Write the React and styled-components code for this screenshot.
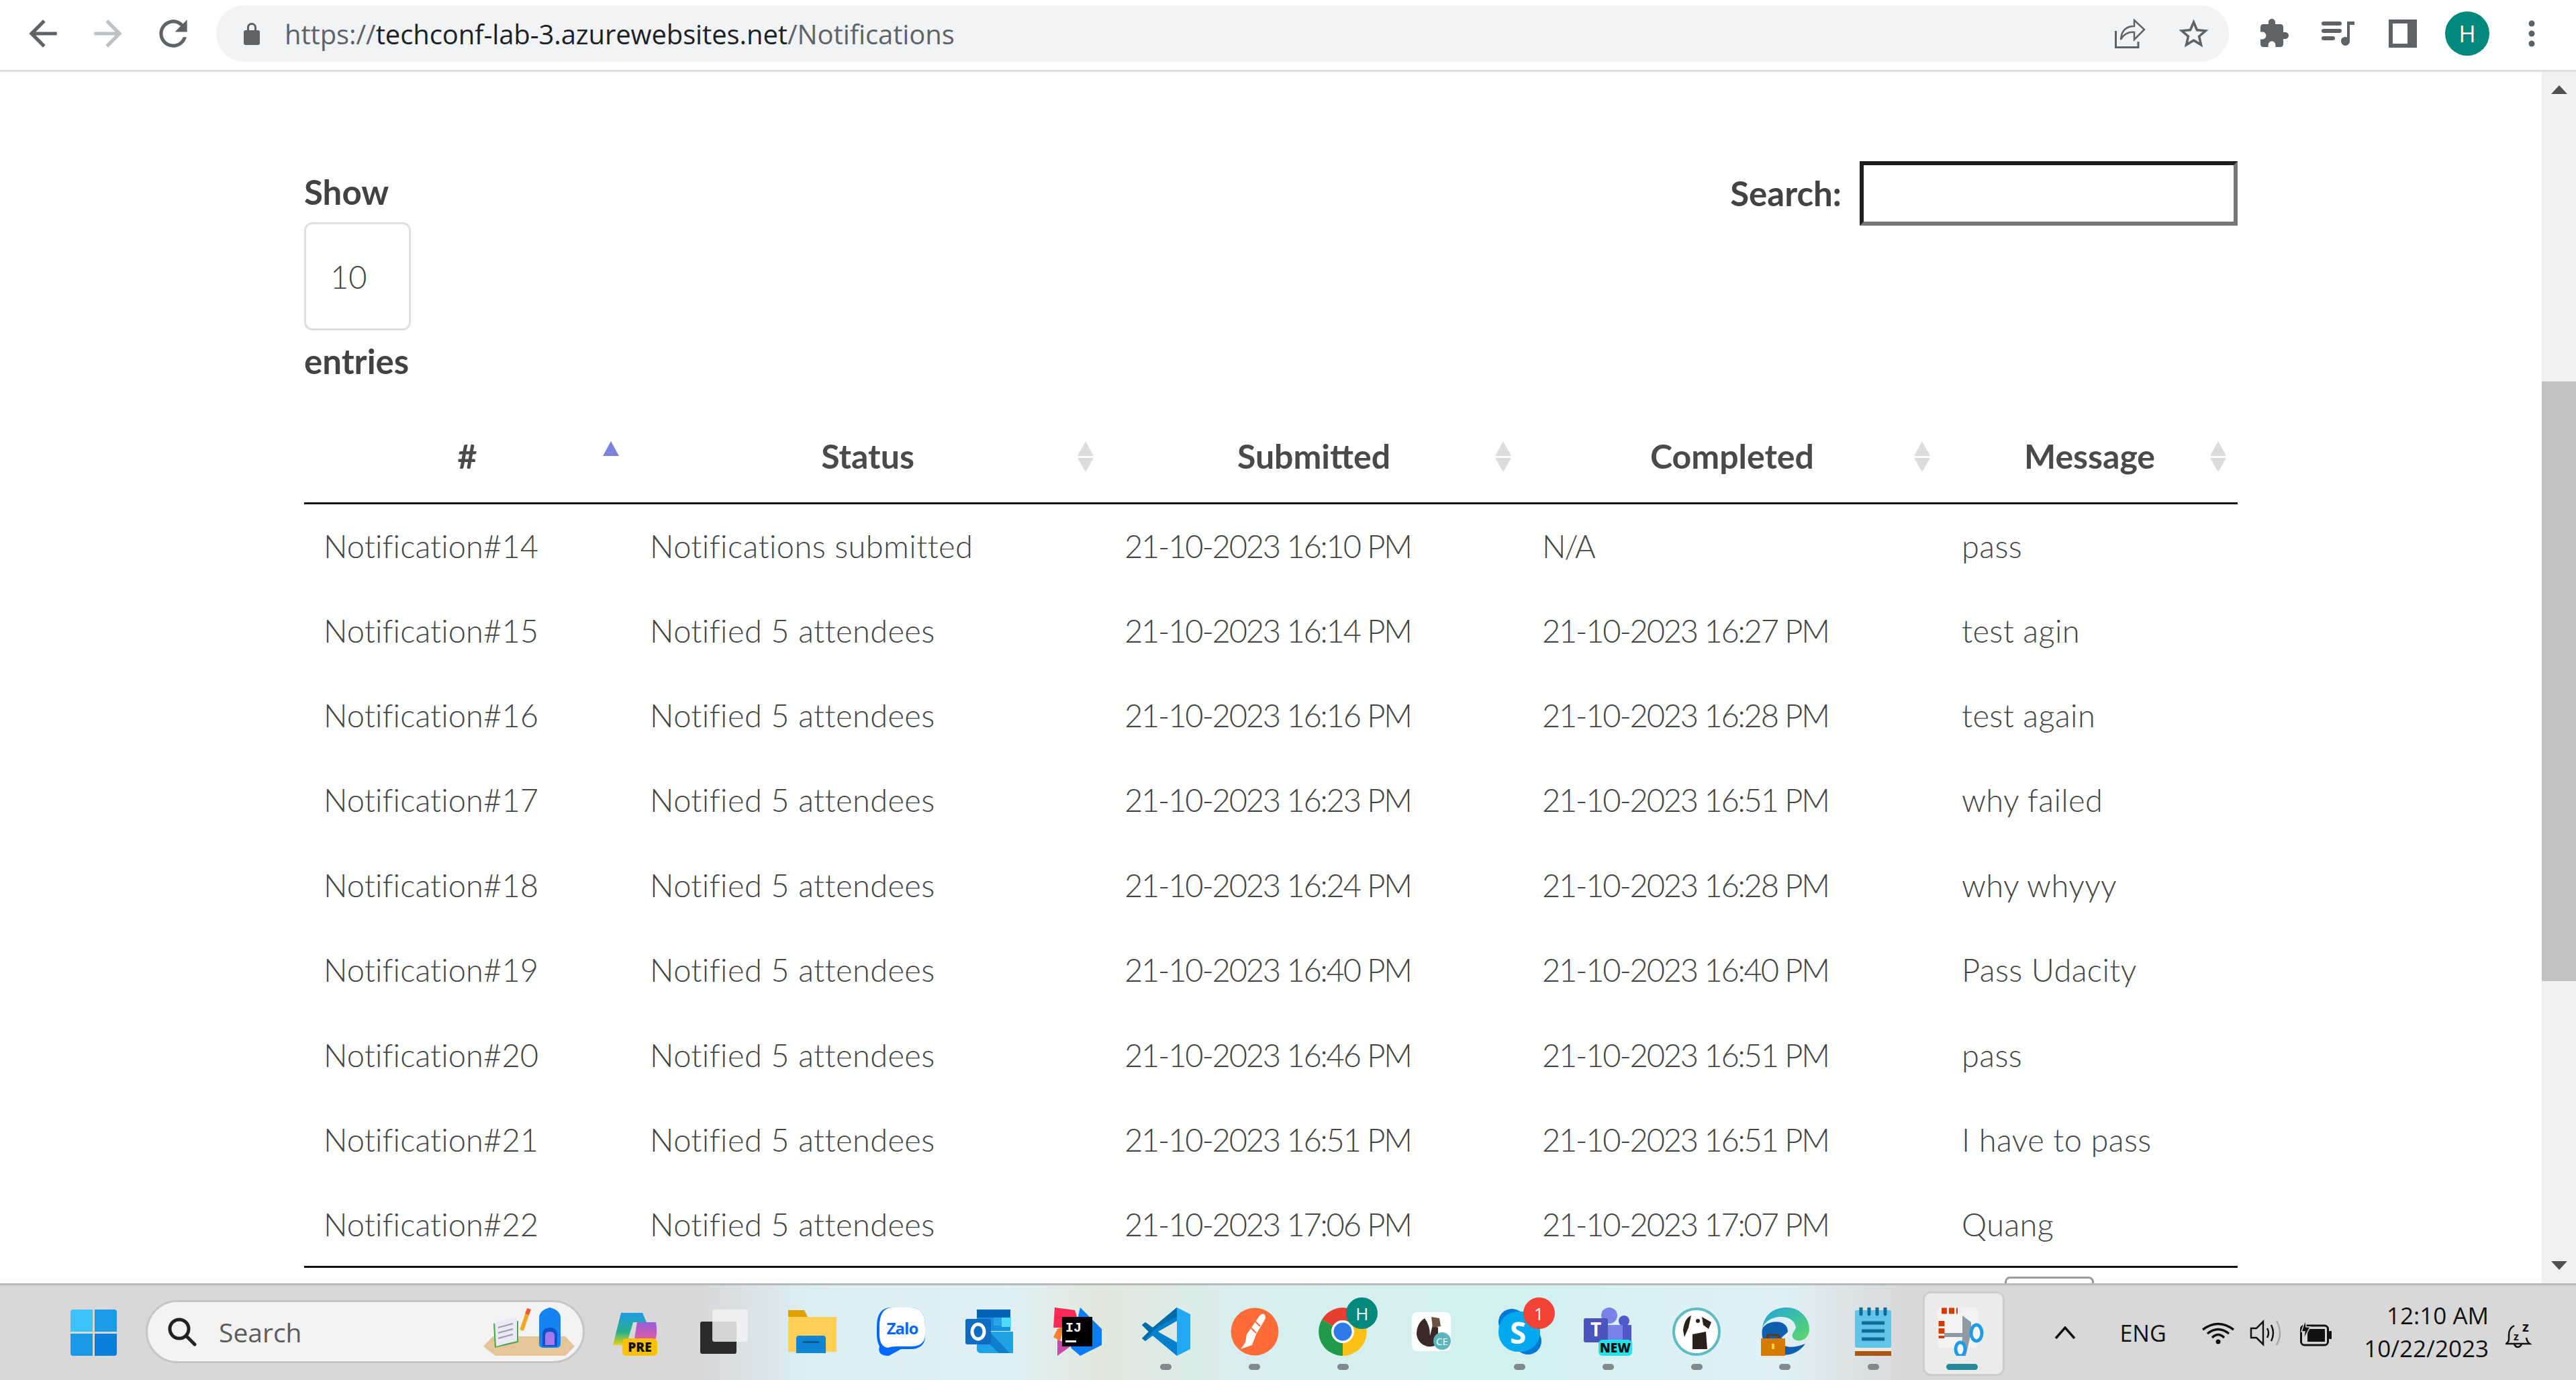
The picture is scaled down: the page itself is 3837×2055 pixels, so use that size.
import React from "react";
import styled, { createGlobalStyle } from "styled-components";

const rows = [
  ["Notification#14", "Notifications submitted", "21-10-2023 16:10 PM", "N/A", "pass"],
  ["Notification#15", "Notified 5 attendees", "21-10-2023 16:14 PM", "21-10-2023 16:27 PM", "test agin"],
  ["Notification#16", "Notified 5 attendees", "21-10-2023 16:16 PM", "21-10-2023 16:28 PM", "test again"],
  ["Notification#17", "Notified 5 attendees", "21-10-2023 16:23 PM", "21-10-2023 16:51 PM", "why failed"],
  ["Notification#18", "Notified 5 attendees", "21-10-2023 16:24 PM", "21-10-2023 16:28 PM", "why whyyy"],
  ["Notification#19", "Notified 5 attendees", "21-10-2023 16:40 PM", "21-10-2023 16:40 PM", "Pass Udacity"],
  ["Notification#20", "Notified 5 attendees", "21-10-2023 16:46 PM", "21-10-2023 16:51 PM", "pass"],
  ["Notification#21", "Notified 5 attendees", "21-10-2023 16:51 PM", "21-10-2023 16:51 PM", "I have to pass"],
  ["Notification#22", "Notified 5 attendees", "21-10-2023 17:06 PM", "21-10-2023 17:07 PM", "Quang"],
];
const columns = [
  { title: "#", width: 486, sort: "asc" },
  { title: "Status", width: 707, sort: "none" },
  { title: "Submitted", width: 622, sort: "none" },
  { title: "Completed", width: 624, sort: "none" },
  { title: "Message", width: 441, sort: "none" },
];

const GlobalStyle = createGlobalStyle`
  html, body { margin: 0; padding: 0; background: #fff; overflow: hidden; }
  * { box-sizing: border-box; }
`;
const Screen = styled.div`
  width: 3837px;
  height: 2055px;
  display: flex;
  flex-direction: column;
  overflow: hidden;
  font-family: "Open Sans", "Liberation Sans", sans-serif;
`;

/* browser toolbar */
const Toolbar = styled.div`
  height: 107px;
  flex: none;
  display: flex;
  align-items: flex-start;
  padding: 8px 18px 0 15px;
  background: #fff;
  border-bottom: 3px solid #dedede;
`;
const ToolSlot = styled.div`
  width: ${(p) => p.$w || 96}px;
  height: 84px;
  flex: none;
  display: flex;
  align-items: center;
  justify-content: center;
`;
const UrlBar = styled.div`
  flex: 1;
  height: 84px;
  margin: 0 19px 0 16px;
  padding: 0 5px 0 40px;
  border-radius: 42px;
  background: #f1f3f4;
  display: flex;
  align-items: center;
`;
const Url = styled.div`
  margin-left: 36px;
  font-size: 40px;
  letter-spacing: -0.1px;
  color: #5f6368;
  white-space: nowrap;
  span { color: #202124; }
`;
const UrlActions = styled.div`
  margin-left: auto;
  display: flex;
`;
const Avatar = styled.div`
  width: 66px;
  height: 66px;
  border-radius: 50%;
  background: #00897b;
  color: #fff;
  font-size: 34px;
  display: flex;
  align-items: center;
  justify-content: center;
`;

/* page */
const Viewport = styled.div`
  flex: 1;
  min-height: 0;
  display: flex;
`;
const Page = styled.div`
  flex: 1;
  min-width: 0;
  overflow: hidden;
  padding: 133px 453px 0;
  background: #fff;
  font-family: "Lato", "Open Sans", sans-serif;
  color: #444;
`;
const Controls = styled.div`
  display: flex;
  justify-content: space-between;
  align-items: flex-start;
`;
const Length = styled.div`
  display: flex;
  flex-direction: column;
  align-items: flex-start;
`;
const ControlLabel = styled.div`
  font-size: 51px;
  font-weight: 700;
  line-height: ${(p) => p.$lh}px;
  margin-top: ${(p) => p.$mt || 0}px;
  color: #424242;
`;
const SelectBox = styled.div`
  width: 159px;
  height: 161px;
  border: 3px solid #dfdfdf;
  border-radius: 12px;
  padding-left: 36px;
  display: flex;
  align-items: center;
  font-size: 47px;
  font-weight: 300;
  color: #444;
`;
const SearchWrap = styled.div`
  display: flex;
  align-items: center;
  gap: 27px;
`;
const SearchInput = styled.div`
  width: 563px;
  height: 96px;
  border-style: solid;
  border-width: 6px;
  border-color: #1f1f1f #767676 #767676 #1f1f1f;
`;
const Table = styled.table`
  width: 2880px;
  margin-top: 31px;
  border-collapse: collapse;
  table-layout: fixed;
`;
const HeadCell = styled.th`
  position: relative;
  width: ${(p) => p.$w}px;
  height: 138px;
  padding: 0;
  font-size: 50px;
  font-weight: 700;
  text-align: center;
  color: #4a4a4a;
  border-bottom: 3px solid #111;
  &::before, &::after {
    content: "";
    position: absolute;
    right: 17px;
    border-left: 12.5px solid transparent;
    border-right: 12.5px solid transparent;
  }
  &::before {
    top: 46px;
    border-bottom: 22px solid ${(p) => (p.$sort === "asc" ? "#7b83dc" : "#dcdcdc")};
  }
  &::after {
    top: 71px;
    border-top: 21px solid ${(p) => (p.$sort === "asc" ? "transparent" : "#dcdcdc")};
  }
`;
const BodyRow = styled.tr`
  height: 126.4px;
  &:last-child td { border-bottom: 3px solid #111; }
`;
const Cell = styled.td`
  padding: 0 0 0 ${(p) => (p.$last ? 30 : 29)}px;
  font-size: 47px;
  font-weight: 300;
  letter-spacing: ${(p) => p.$spacing}px;
  color: #444;
  white-space: nowrap;
`;
const Pager = styled.div`
  display: flex;
  justify-content: flex-end;
  padding: 13px 214px 0 0;
`;
const PageButton = styled.div`
  width: 133px;
  height: 60px;
  border: 3px solid #9a9a9a;
  border-radius: 8px;
`;

/* scrollbar */
const Scrollbar = styled.div`
  width: 51px;
  flex: none;
  background: #f1f1f1;
  display: flex;
  flex-direction: column;
  align-items: center;
`;
const ScrollArrow = styled.div`
  margin-top: ${(p) => (p.$down ? "auto" : "20px")};
  margin-bottom: ${(p) => (p.$down ? "20px" : "0")};
  border-left: 12.5px solid transparent;
  border-right: 12.5px solid transparent;
  ${(p) => (p.$down ? "border-top" : "border-bottom")}: 13px solid #505050;
`;
const ScrollThumb = styled.div`
  width: 100%;
  height: 893px;
  margin-top: 428px;
  background: #c1c1c1;
`;

/* taskbar */
const Taskbar = styled.div`
  height: 144px;
  flex: none;
  display: flex;
  align-items: flex-start;
  padding-left: 105px;
  border-top: 3px solid #b8b8b8;
  background: linear-gradient(90deg, #d8d8d8 0, #d8d8d8 1040px, #dceef5 1200px, #dff1f7 1500px,
    #e1e8dc 1640px, #d8eeee 1850px, #d3f0f1 2250px, #dff1f7 2650px, #d8d8d8 2840px, #d8d8d8 100%);
`;
const StartIcon = styled.div`
  width: 69px;
  height: 69px;
  margin-top: 36px;
  flex: none;
`;
const SearchPill = styled.div`
  width: 654px;
  height: 94px;
  margin: 22px 10px 0 43px;
  padding: 0 12px 0 29px;
  flex: none;
  border: 3px solid #c6c6c6;
  border-radius: 47px;
  background: #f3f3f3;
  display: flex;
  align-items: center;
  font-size: 39px;
  color: #5c5c5c;
  gap: 33px;
  svg:last-child { margin-left: auto; }
`;
const TaskSlot = styled.div`
  position: relative;
  width: 131.7px;
  flex: none;
  padding-top: 33px;
  display: flex;
  flex-direction: column;
  align-items: center;
  ${(p) => p.$active && `
    &::before {
      content: "";
      position: absolute;
      left: 8px;
      top: 9px;
      width: 116px;
      height: 120px;
      background: #ebebeb;
      border: 3px solid #cdcdcd;
      border-radius: 12px;
    }
  `}
`;
const TaskIcon = styled.div`
  position: relative;
  width: 72px;
  height: 72px;
`;
const Running = styled.div`
  position: relative;
  width: ${(p) => (p.$active ? 47 : 17)}px;
  height: 9px;
  margin-top: 12px;
  border-radius: 5px;
  background: ${(p) => (p.$active ? "#248a9a" : "#808a8c")};
`;
const Badge = styled.div`
  position: absolute;
  top: -15px;
  right: -16px;
  width: 47px;
  height: 47px;
  border-radius: 50%;
  background: ${(p) => p.$bg};
  color: #fff;
  font-size: 26px;
  display: flex;
  align-items: center;
  justify-content: center;
`;
const Tray = styled.div`
  flex: 1;
  display: flex;
  align-items: center;
  height: 141px;
  padding-left: 52px;
  color: #111;
`;
const TraySlot = styled.div`
  width: ${(p) => p.$w}px;
  margin-left: ${(p) => p.$ml || 0}px;
  flex: none;
  display: flex;
  align-items: center;
  justify-content: center;
  font-size: 34px;
`;
const Clock = styled.div`
  width: 217px;
  margin: -4px 0 0 5px;
  flex: none;
  text-align: right;
  font-size: 35px;
  line-height: 49px;
`;

/* chrome icons */
const Icon = ({ size, color = "#5f6368", d }) => (
  <svg width={size} height={size} viewBox="0 0 24 24" fill={color}><path d={d} /></svg>
);
const ShareIcon = () => (
  <svg width="46" height="44" viewBox="0 0 46 44" fill="none" stroke="#5f6368" strokeWidth="2.5">
    <path d="M1.5 18V42.5H35V34" strokeWidth="3" />
    <path d="M9 31C10 17 17 11 29 11V2L44 16 29 31V20C21 19 13 23 9 31Z" />
  </svg>
);
const QueueIcon = () => (
  <svg width="50" height="38" viewBox="0 0 50 38" fill="#5f6368">
    <rect x="0" y="1" width="30" height="6" rx="3" />
    <rect x="0" y="12" width="30" height="6" rx="3" />
    <rect x="0" y="23" width="20" height="6" rx="3" />
    <path d="M38 1H49V6H42V30C42 34 39 37 35.5 37S29 34 29 30 32 24 35.500 24C36.500 24 37.300 24.200 38 24.500Z" />
  </svg>
);
const PanelIcon = () => (
  <svg width="42" height="42" viewBox="0 0 42 42" fill="#5f6368" fillRule="evenodd">
    <path d="M0 0H42V42H0ZM6 6V36H28V6Z" />
  </svg>
);
const DotsIcon = () => (
  <svg width="10" height="40" viewBox="0 0 10 40" fill="#5f6368">
    <circle cx="5" cy="5" r="4.500" />
    <circle cx="5" cy="20" r="4.500" />
    <circle cx="5" cy="35" r="4.500" />
  </svg>
);
const LockIcon = () => (
  <svg width="26" height="34" viewBox="0 0 26 34" fill="#5f6368">
    <path d="M6 13V8C6 4 9 1 13 1S20 4 20 8V13H17V8C17 5.500 15.500 4 13 4S9 5.500 9 8V13Z" />
    <rect x="1" y="12" width="24" height="22" rx="3" />
  </svg>
);

/* taskbar icons, all in a 72 box */
const Svg = ({ children }) => (
  <svg width="72" height="72" viewBox="0 0 72 72" style={{ display: "block" }}>{children}</svg>
);
const StartLogo = () => (
  <svg width="69" height="69" viewBox="0 0 69 69" style={{ display: "block" }}>
    <path d="M0 4Q0 0 4 0H33V33H0Z" fill="#3cc3fb" />
    <path d="M36 0H65Q69 0 69 4V33H36Z" fill="#1c9be6" />
    <path d="M0 36H33V69H4Q0 69 0 65Z" fill="#1a9ae5" />
    <path d="M36 36H69V65Q69 69 65 69H36Z" fill="#0a7fda" />
  </svg>
);
const Magnifier = () => (
  <svg width="44" height="44" viewBox="0 0 44 44" fill="none" stroke="#222" strokeWidth="5">
    <circle cx="18" cy="18" r="14" />
    <path d="M28 28L41 41" strokeLinecap="round" />
  </svg>
);
const SchoolArt = () => (
  <svg width="136" height="72" viewBox="0 0 136 72">
    <path d="M14 43H122L136 58 122 72H18L0 58Z" fill="#e6c49a" />
    <path d="M15 24L52 20V52L17 60Z" fill="#4aa84f" />
    <path d="M17 22L33 18 50 14V50L33 54 19 58Z" fill="#ece8f4" />
    <path d="M22 30L44 24M22 38L44 32M22 46L44 40" stroke="#9d98ad" strokeWidth="2" />
    <path d="M68 2L57 34" stroke="#f6a623" strokeWidth="6" />
    <path d="M68 2L65 10" stroke="#f0573a" strokeWidth="6" />
    <path d="M83 16Q83 4 99 0Q115 4 115 16V54Q115 60 108 60H90Q83 60 83 54Z" fill="#1683f5" />
    <path d="M88 58V40Q88 30 99 30T110 40V58Z" fill="#0a54c9" />
    <path d="M92 56V42Q92 36 99 36T106 42V56Z" fill="#a678ee" />
  </svg>
);
const CopilotIcon = () => (
  <Svg>
    <defs>
      <linearGradient id="cop" x1="0" y1="0" x2="0" y2="1">
        <stop offset="0" stopColor="#1f9be8" />
        <stop offset="0.6" stopColor="#28b08a" />
        <stop offset="1" stopColor="#e6d414" />
      </linearGradient>
      <linearGradient id="cop2" x1="0" y1="0" x2="0" y2="1">
        <stop offset="0" stopColor="#9a5ce0" />
        <stop offset="1" stopColor="#f8608a" />
      </linearGradient>
    </defs>
    <path d="M14 8H46L52 22H32L22 56H2Z" fill="url(#cop)" />
    <path d="M38 22H66Q70 40 62 58H32Z" fill="url(#cop2)" />
    <rect x="16" y="46" width="52" height="26" rx="6" fill="#ffc000" />
    <text x="42" y="66" textAnchor="middle" fontFamily="Open Sans" fontWeight="800" fontSize="19" fill="#111">PRE</text>
  </Svg>
);
const TaskViewIcon = () => (
  <Svg>
    <rect x="0" y="21" width="54" height="48" rx="3" fill="#2b2b2b" />
    <rect x="18" y="3" width="53" height="48" rx="3" fill="#f2f2f2" fillOpacity="0.85" />
  </Svg>
);
const FolderIcon = () => (
  <Svg>
    <path d="M0 4H24L30 16H0Z" fill="#dfa000" />
    <path d="M0 14H72V66H0Z" fill="#ffcf58" />
    <path d="M12 46Q12 42 16 42H52Q56 42 56 46V68H12Z" fill="#0f86d4" />
    <rect x="22" y="50" width="24" height="3" fill="#0a5a94" />
  </Svg>
);
const ZaloIcon = () => (
  <Svg>
    <path d="M22 0H50Q72 0 72 28V42Q72 62 50 62H36L18 72Q0 72 4 58Q0 50 0 40V28Q0 0 22 0Z" fill="#0068ff" />
    <path d="M24 0H50Q72 0 72 28V40Q72 58 50 58H30Q22 58 16 60Q4 58 4 40V28Q4 0 24 0Z" fill="#fff" />
    <text x="38" y="40" textAnchor="middle" fontFamily="Open Sans" fontWeight="700" fontSize="24" letterSpacing="-1" fill="#0068ff">Zalo</text>
  </Svg>
);
const OutlookIcon = () => (
  <Svg>
    <rect x="17" y="3" width="50" height="32" fill="#1490df" />
    <rect x="17" y="3" width="50" height="12" fill="#0364b8" />
    <rect x="42" y="15" width="25" height="12" fill="#28a8ea" />
    <rect x="54" y="15" width="14" height="14" fill="#50d9ff" />
    <path d="M17 36H71V68H24Q17 68 17 62Z" fill="#1fa2e6" />
    <path d="M17 36L50 68H66L36 36Z" fill="#0f7fcb" />
    <rect x="0" y="17" width="38" height="38" rx="3" fill="#0f6cc1" />
    <ellipse cx="19" cy="36" rx="9" ry="11" fill="none" stroke="#fff" strokeWidth="5" />
  </Svg>
);
const IdeaIcon = () => (
  <Svg>
    <path d="M2 0L32 4 40 30H0Z" fill="#fe2857" />
    <path d="M40 0L72 32V56L40 72 26 60Z" fill="#087cfa" />
    <path d="M6 32L16 28 10 50 0 44Z" fill="#fe7f2d" />
    <path d="M6 48L28 56 6 72Z" fill="#c74ca6" />
    <rect x="13" y="14" width="45" height="44" fill="#000" />
    <text x="18" y="36" fontFamily="Liberation Mono" fontWeight="700" fontSize="20" fill="#fff">IJ</text>
    <rect x="18" y="49" width="16" height="3" fill="#fff" />
  </Svg>
);
const VsCodeIcon = () => (
  <Svg>
    <path d="M52 0L72 10V62L52 72Z" fill="#23a9f1" />
    <path d="M52 0V20L24 36 52 52V72L16 42 5 50 0 46 10 36 0 26 5 22 16 30Z" fill="#0080cc" />
    <path d="M52 0L16 30 5 22 0 26 10 36 0 46 5 50Q14 30 52 14Z" fill="#0069a8" />
  </Svg>
);
const PostmanIcon = () => (
  <Svg>
    <circle cx="36" cy="36" r="35.500" fill="#ff6c37" />
    <path d="M50 10Q54 14 50 20L38 40 32 56 15 62 22 52 24 40 42 14Q46 8 50 10Z" fill="#fff" />
    <path d="M36 20L44 28M30 30L38 38" stroke="#ff6c37" strokeWidth="2" />
  </Svg>
);
const ChromeIcon = () => (
  <Svg>
    <path d="M36 36L5 18A36 36 0 0 1 67 18Z" fill="#e5402f" />
    <path d="M36 36L67 18A36 36 0 0 1 36 72Z" fill="#fbc116" />
    <path d="M36 36V72A36 36 0 0 1 5 18Z" fill="#1e9a48" />
    <circle cx="36" cy="36" r="17" fill="#fff" />
    <circle cx="36" cy="36" r="13.500" fill="#2f7ce8" />
  </Svg>
);
const BearIcon = () => (
  <Svg>
    <rect x="7" y="7" width="58" height="58" rx="8" fill="#fff" />
    <path d="M26 16Q14 24 14 40Q16 54 30 58Q44 60 46 50V30L38 26 34 42Q34 26 26 16Z" fill="#3a2a25" />
    <path d="M36 14L48 16 50 28 38 30Z" fill="#6e5140" />
    <circle cx="52" cy="50" r="13" fill="#5bb5bd" />
    <text x="52" y="56" textAnchor="middle" fontFamily="Open Sans" fontSize="15" fill="#fff">CE</text>
  </Svg>
);
const SkypeIcon = () => (
  <Svg>
    <circle cx="24" cy="22" r="20" fill="#0078d4" />
    <circle cx="48" cy="50" r="20" fill="#0078d4" />
    <rect x="4" y="6" width="62" height="60" rx="29" fill="#00a8ee" />
    <text x="33" y="54" textAnchor="middle" fontFamily="Open Sans" fontWeight="700" fontSize="44" fill="#fff">S</text>
  </Svg>
);
const TeamsIcon = () => (
  <Svg>
    <circle cx="38" cy="12" r="12" fill="#7b83eb" />
    <circle cx="60" cy="20" r="8" fill="#5059c9" />
    <path d="M24 26H58V60H24Z" fill="#7b83eb" />
    <path d="M58 26H71V58H58Z" fill="#5059c9" />
    <rect x="0" y="16" width="36" height="36" rx="3" fill="#4b53bc" />
    <text x="18" y="43" textAnchor="middle" fontFamily="Open Sans" fontWeight="700" fontSize="28" fill="#fff">T</text>
    <rect x="22" y="48" width="50" height="24" rx="6" fill="#22e3e8" />
    <text x="47" y="67" textAnchor="middle" fontFamily="Open Sans" fontWeight="800" fontSize="19" fill="#111">NEW</text>
  </Svg>
);
const DogIcon = () => (
  <Svg>
    <circle cx="36" cy="36" r="34" fill="#fff" stroke="#5cbcc0" strokeWidth="4" />
    <path d="M16 34Q18 16 28 12L24 30 18 44Z" fill="#2a201c" />
    <path d="M44 14L58 22 54 32 46 26Z" fill="#2a201c" />
    <path d="M30 40L50 36 52 62H30Z" fill="#2a201c" />
    <circle cx="38" cy="20" r="3" fill="#2a201c" />
  </Svg>
);
const EdgeIcon = () => (
  <Svg>
    <defs>
      <linearGradient id="edge" x1="0" y1="0" x2="1" y2="1">
        <stop offset="0" stopColor="#1ea6dc" />
        <stop offset="1" stopColor="#5fd868" />
      </linearGradient>
    </defs>
    <path d="M2 32C4 10 20 0 38 0C60 0 72 18 72 32C72 48 56 54 48 46C44 40 50 36 52 30C50 18 40 14 30 14C16 14 4 22 2 32Z" fill="url(#edge)" />
    <path d="M2 32C8 18 40 16 40 36C36 42 30 42 30 50C34 62 50 60 66 54C54 72 30 76 14 64C4 56 0 44 2 32Z" fill="#0f5fb0" />
    <path d="M0 46H36V72H0Z" fill="#d67a00" />
    <path d="M10 46V41H26V46" fill="none" stroke="#5a3a10" strokeWidth="3" />
    <rect x="16" y="54" width="4" height="8" fill="#ffd24a" />
  </Svg>
);
const NotepadIcon = () => (
  <Svg>
    <rect x="9" y="4" width="54" height="56" rx="3" fill="#62c4e8" />
    <rect x="9" y="60" width="54" height="12" fill="#a9560f" />
    <rect x="9" y="60" width="54" height="5" fill="#f0e8dc" />
    <path d="M18 1V10M30 1V10M42 1V10M54 1V10" stroke="#0d6d95" strokeWidth="5" strokeLinecap="round" />
    <path d="M19 23H53M19 35H53M19 47H53" stroke="#0d6d95" strokeWidth="5" />
  </Svg>
);
const SnipIcon = () => (
  <Svg>
    <rect x="0" y="0" width="60" height="60" rx="6" fill="#f3f3f3" />
    <path d="M6 5H30M6 20V46" stroke="#d83b01" strokeWidth="9" strokeDasharray="8 3" />
    <path d="M37 12L50 22V38L42 72H34L37 44H10V38H37Z" fill="#8f9aa5" />
    <ellipse cx="58" cy="38" rx="8" ry="12" fill="#fff" stroke="#1f9be8" strokeWidth="5" />
    <ellipse cx="34" cy="62" rx="7" ry="10" fill="#fff" stroke="#1f9be8" strokeWidth="5" />
  </Svg>
);

/* tray icons */
const ChevronIcon = () => (
  <svg width="32" height="19" viewBox="0 0 32 19" fill="none" stroke="#111" strokeWidth="3.500">
    <path d="M2 18L16 2 30 18" />
  </svg>
);
const WifiIcon = () => (
  <svg width="50" height="34" viewBox="0 0 50 34" fill="none" stroke="#111" strokeWidth="3.500">
    <path d="M2 12Q25 -5 48 12M9 18Q25 5 41 18M16 24Q25 15 34 24" />
    <circle cx="25" cy="30" r="3.500" fill="#111" stroke="none" />
  </svg>
);
const VolumeIcon = () => (
  <svg width="48" height="40" viewBox="0 0 48 40" fill="none" stroke="#111" strokeWidth="2.500">
    <path d="M2 13H10L20 3V37L10 27H2Z" />
    <path d="M26 13Q30 20 26 27M32 8Q38 20 32 32" />
    <path d="M40 2Q50 20 40 38" stroke="#a8a8a8" />
  </svg>
);
const BatteryIcon = () => (
  <svg width="48" height="40" viewBox="0 0 48 40" fill="none" stroke="#111" strokeWidth="3">
    <rect x="1.500" y="9" width="40" height="29" rx="5" />
    <rect x="11" y="14" width="26" height="19" fill="#111" stroke="none" />
    <rect x="43" y="17" width="4" height="12" rx="1" fill="#111" stroke="none" />
    <path d="M8 0L2 18H7L5 30 15 11H9Z" fill="#111" stroke="#d8d8d8" strokeWidth="1.500" />
  </svg>
);
const BellIcon = () => (
  <svg width="42" height="54" viewBox="0 -10 42 54" fill="none" stroke="#111" strokeWidth="2.500">
    <path d="M13 6Q5 10 5 20V26Q5 30 1 33H36Q32 30 31 24" />
    <path d="M13 34Q18 42 24 34" />
    <text x="12" y="28" fontFamily="Open Sans" fontWeight="700" fontSize="16" fill="#111" stroke="none">z</text>
    <text x="25" y="15" fontFamily="Open Sans" fontWeight="700" fontSize="20" fill="#111" stroke="none">z</text>
  </svg>
);

const taskItems = [
  { icon: <CopilotIcon /> },
  { icon: <TaskViewIcon /> },
  { icon: <FolderIcon /> },
  { icon: <ZaloIcon /> },
  { icon: <OutlookIcon /> },
  { icon: <IdeaIcon /> },
  { icon: <VsCodeIcon />, running: true },
  { icon: <PostmanIcon />, running: true },
  { icon: <ChromeIcon />, running: true, badge: { text: "H", bg: "#00897b" } },
  { icon: <BearIcon /> },
  { icon: <SkypeIcon />, running: true, badge: { text: "1", bg: "#f44336" } },
  { icon: <TeamsIcon />, running: true },
  { icon: <DogIcon />, running: true },
  { icon: <EdgeIcon />, running: true },
  { icon: <NotepadIcon />, running: true },
  { icon: <SnipIcon />, running: true, active: true },
];

const cellSpacing = [0.1, 0.4, -2.2, -2.2, 0.4];

function App() {
  return (
    <Screen>
      <GlobalStyle />
      <Toolbar>
        <ToolSlot $w={97}>
          <Icon size={62} d="M20 11H7.830l5.590-5.590L12 4l-8 8 8 8 1.410-1.410L7.830 13H20v-2z" />
        </ToolSlot>
        <ToolSlot $w={97}>
          <Icon size={62} color="#bdc1c6" d="M12 4l-1.410 1.410L16.170 11H4v2h12.170l-5.580 5.590L12 20l8-8z" />
        </ToolSlot>
        <ToolSlot $w={97}>
          <Icon size={62} d="M17.650 6.350C16.200 4.900 14.210 4 12 4c-4.420 0-7.990 3.580-7.990 8s3.570 8 7.990 8c3.730 0 6.840-2.550 7.730-6h-2.080c-.820 2.330-3.040 4-5.650 4-3.310 0-6-2.690-6-6s2.690-6 6-6c1.660 0 3.140.690 4.220 1.780L13 11h7V4l-2.350 2.350z" />
        </ToolSlot>
        <UrlBar>
          <LockIcon />
          <Url>https://<span>techconf-lab-3.azurewebsites.net</span>/Notifications</Url>
          <UrlActions>
            <ToolSlot $w={95}><ShareIcon /></ToolSlot>
            <ToolSlot $w={95}>
              <Icon size={53} d="M22 9.240l-7.190-.620L12 2 9.190 8.630 2 9.240l5.460 4.730L5.820 21 12 17.270 18.180 21l-1.630-7.030L22 9.240zM12 15.400l-3.760 2.270 1-4.280-3.320-2.880 4.380-.380L12 6.100l1.710 4.040 4.380.380-3.320 2.880 1 4.280L12 15.400z" />
            </ToolSlot>
          </UrlActions>
        </UrlBar>
        <ToolSlot>
          <Icon size={48} d="M20.500 11H19V7c0-1.100-.900-2-2-2h-4V3.500C13 2.120 11.880 1 10.500 1S8 2.120 8 3.500V5H4c-1.100 0-1.990.900-1.990 2v3.800H3.500c1.490 0 2.700 1.210 2.700 2.700s-1.210 2.700-2.700 2.700H2V20c0 1.100.900 2 2 2h3.800v-1.500c0-1.490 1.210-2.700 2.700-2.700 1.490 0 2.700 1.210 2.700 2.700V22H17c1.100 0 2-.900 2-2v-4h1.500c1.380 0 2.500-1.120 2.500-2.500S21.880 11 20.500 11z" />
        </ToolSlot>
        <ToolSlot><QueueIcon /></ToolSlot>
        <ToolSlot><PanelIcon /></ToolSlot>
        <ToolSlot><Avatar>H</Avatar></ToolSlot>
        <ToolSlot><DotsIcon /></ToolSlot>
      </Toolbar>

      <Viewport>
        <Page>
          <Controls>
            <Length>
              <ControlLabel $lh={91}>Show</ControlLabel>
              <SelectBox>10</SelectBox>
              <ControlLabel $lh={84} $mt={4}>entries</ControlLabel>
            </Length>
            <SearchWrap>
              <ControlLabel $lh={96}>Search:</ControlLabel>
              <SearchInput />
            </SearchWrap>
          </Controls>
          <Table>
            <thead>
              <tr>
                {columns.map((col) => (
                  <HeadCell key={col.title} $w={col.width} $sort={col.sort}>{col.title}</HeadCell>
                ))}
              </tr>
            </thead>
            <tbody>
              {rows.map((row) => (
                <BodyRow key={row[0]}>
                  {row.map((value, i) => (
                    <Cell key={i} $spacing={cellSpacing[i]} $last={i === 4}>{value}</Cell>
                  ))}
                </BodyRow>
              ))}
            </tbody>
          </Table>
          <Pager><PageButton /></Pager>
        </Page>
        <Scrollbar>
          <ScrollArrow />
          <ScrollThumb />
          <ScrollArrow $down />
        </Scrollbar>
      </Viewport>

      <Taskbar>
        <StartIcon><StartLogo /></StartIcon>
        <SearchPill>
          <Magnifier />
          Search
          <SchoolArt />
        </SearchPill>
        {taskItems.map((item, i) => (
          <TaskSlot key={i} $active={item.active}>
            <TaskIcon>
              {item.icon}
              {item.badge && <Badge $bg={item.badge.bg}>{item.badge.text}</Badge>}
            </TaskIcon>
            {item.running && <Running $active={item.active} />}
          </TaskSlot>
        ))}
        <Tray>
          <TraySlot $w={72}><ChevronIcon /></TraySlot>
          <TraySlot $w={110} $ml={25}>ENG</TraySlot>
          <TraySlot $w={60} $ml={27}><WifiIcon /></TraySlot>
          <TraySlot $w={70} $ml={6}><VolumeIcon /></TraySlot>
          <TraySlot $w={70} $ml={5}><BatteryIcon /></TraySlot>
          <Clock>12:10 AM<br />10/22/2023</Clock>
          <TraySlot $w={60} $ml={16}><BellIcon /></TraySlot>
        </Tray>
      </Taskbar>
    </Screen>
  );
}

export default App;
